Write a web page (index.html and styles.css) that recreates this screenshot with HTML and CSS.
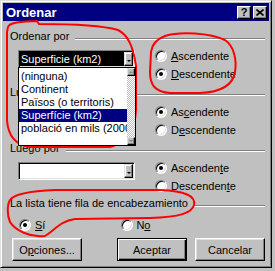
FILE: index.html
```html
<!DOCTYPE html>
<html lang="es">
<head>
    <meta charset="UTF-8">
    <title>Ordenar</title>
    <link rel="stylesheet" href="styles.css">
</head>
<body>

<div class="window">
    <!-- Title bar -->
    <div class="titlebar">
        <span class="title">Ordenar</span>
        <div class="title-buttons">
            <span class="tbtn help">?</span>
            <span class="tbtn">
                <svg width="8" height="7" viewBox="0 0 8 7"><path d="M0.5 0.5 L7.5 6.5 M7.5 0.5 L0.5 6.5" stroke="#000" stroke-width="1.6"/></svg>
            </span>
        </div>
    </div>

    <div class="content">
        <!-- Ordenar por -->
        <div class="group">
            <div class="legend"><span>Ordenar por</span></div>
            <div class="group-body">
                <div class="combo-col">
                    <div class="combo">
                        <span class="combo-field selected">Superficie (km2)</span>
                        <span class="combo-btn"><span class="arrow"></span></span>
                    </div>
                    <div class="dropdown">
                        <div class="items">
                            <div class="item">(ninguna)</div>
                            <div class="item">Continent</div>
                            <div class="item">Països (o territoris)</div>
                            <div class="item active">Superfície (km2)</div>
                            <div class="item">població en mils (2000)</div>
                        </div>
                        <div class="scrollbar">
                            <span class="sbtn"><span class="arrow up"></span></span>
                            <span class="sbtn"><span class="arrow"></span></span>
                        </div>
                    </div>
                </div>
                <div class="radios">
                    <div class="radio-row"><span class="radio"></span><span><u>A</u>scendente</span></div>
                    <div class="radio-row"><span class="radio on"></span><span><u>D</u>escendente</span></div>
                </div>
            </div>
        </div>

        <!-- Luego por -->
        <div class="group">
            <div class="legend"><span>Luego por</span></div>
            <div class="group-body">
                <div class="combo-col">
                    <div class="combo">
                        <span class="combo-field"></span>
                        <span class="combo-btn"><span class="arrow"></span></span>
                    </div>
                </div>
                <div class="radios">
                    <div class="radio-row"><span class="radio on"></span><span>As<u>c</u>endente</span></div>
                    <div class="radio-row"><span class="radio"></span><span>D<u>e</u>scendente</span></div>
                </div>
            </div>
        </div>

        <!-- Luego por -->
        <div class="group">
            <div class="legend"><span>Luego por</span></div>
            <div class="group-body">
                <div class="combo-col">
                    <div class="combo">
                        <span class="combo-field"></span>
                        <span class="combo-btn"><span class="arrow"></span></span>
                    </div>
                </div>
                <div class="radios">
                    <div class="radio-row"><span class="radio on"></span><span>Ascenden<u>t</u>e</span></div>
                    <div class="radio-row"><span class="radio"></span><span>Descenden<u>t</u>e</span></div>
                </div>
            </div>
        </div>

        <!-- La lista tiene fila de encabezamiento -->
        <div class="group header-group">
            <div class="legend"><span>La lista tiene fila de encabezamiento</span></div>
            <div class="header-options">
                <div class="radio-row si"><span class="radio on"></span><span><u>S</u>í</span></div>
                <div class="radio-row no"><span class="radio"></span><span>N<u>o</u></span></div>
            </div>
        </div>

        <div class="buttons">
            <span class="btn">O<u>p</u>ciones...</span>
            <div class="right-buttons">
                <span class="btn default">Aceptar</span>
                <span class="btn">Cancelar</span>
            </div>
        </div>
    </div>
</div>

<!-- hand drawn red marks -->
<svg class="marks" width="275" height="271" viewBox="0 0 275 271">
    <path d="M8 27 C10 22, 22 22, 37 21 L39 24 C70 24, 104 26, 118 30 C128 35, 133 46, 136 66 L136 110 C135 130, 128 142, 110 147 L30 147 C15 145, 8 135, 7 120 L7 32 Z"/>
    <path d="M165 36 C180 31, 210 33, 225 40 C234 46, 237 60, 235 72 C233 85, 222 92, 200 93 L170 93 C155 92, 150 85, 150 72 L151 52 C152 44, 157 39, 165 36 Z"/>
    <path d="M10 200 C14 194, 30 191, 55 190 L160 190 C185 191, 196 196, 194 205 C192 213, 180 217, 150 218 L75 219 C60 221, 55 230, 45 236 C30 238, 15 230, 10 222 C7 215, 7 205, 10 200 Z"/>
</svg>

</body>
</html>
```

FILE: styles.css
```css
body {
    margin: 0;
    background: #c0c0c0;
    font-family: "Liberation Sans", Arial, sans-serif;
    font-size: 11px;
    color: #000;
}

/* Window frame */
.window {
    width: 272px;
    height: 268px;
    box-sizing: border-box;
    border: 1px solid;
    border-color: #dfdfdf #000 #000 #dfdfdf;
    box-shadow: inset 1px 1px #fff, inset -1px -1px #808080;
    padding: 2px;
}

/* Title bar */
.titlebar {
    height: 18px;
    background: #000080;
    display: flex;
    align-items: center;
    justify-content: space-between;
    padding: 0 2px 0 3px;
}

.title {
    color: #fff;
    font-weight: bold;
    font-size: 13px;
}

.title-buttons {
    display: flex;
    gap: 2px;
}

.tbtn {
    width: 14px;
    height: 13px;
    box-sizing: border-box;
    background: #c0c0c0;
    border: 1px solid;
    border-color: #fff #000 #000 #fff;
    box-shadow: inset -1px -1px #808080;
    display: flex;
    align-items: center;
    justify-content: center;
}

.help {
    font-weight: bold;
    font-size: 11px;
    line-height: 11px;
}

/* Dialog content */
.content {
    padding: 9px 4px 0 7px;
}

.group {
    margin-bottom: 3px;
}

.legend {
    display: flex;
    line-height: 13px;
}

.legend::after {
    content: "";
    flex: 1;
    height: 0;
    margin: 8px 0 0 6px;
    border-top: 1px solid #808080;
    border-bottom: 1px solid #fff;
}

.group-body {
    display: flex;
    margin-top: 4px;
}

.combo-col {
    position: relative;
    width: 117px;
    margin-left: 8px;
    padding-top: 3px;
}

/* Combo box */
.combo {
    height: 18px;
    box-sizing: border-box;
    display: flex;
    padding: 1px;
    background: #fff;
    border: 1px solid;
    border-color: #808080 #fff #fff #808080;
    box-shadow: inset 1px 1px #000, inset -1px -1px #dfdfdf;
}

.combo-field {
    flex: 1;
    line-height: 14px;
    padding-left: 1px;
    white-space: nowrap;
    overflow: hidden;
}

.combo-field.selected {
    background: #000;
    color: #fff;
}

.combo-btn {
    width: 9px;
    box-sizing: border-box;
    background: #c0c0c0;
    border: 1px solid;
    border-color: #dfdfdf #000 #000 #dfdfdf;
    box-shadow: inset -1px -1px #808080, inset 1px 1px #fff;
    display: flex;
    align-items: center;
    justify-content: center;
}

.arrow {
    width: 0;
    height: 0;
    margin-top: 4px;
    border-left: 2px solid transparent;
    border-right: 2px solid transparent;
    border-top: 2px solid #000;
}

/* Open drop-down list */
.dropdown {
    position: absolute;
    top: 20px;
    left: 0;
    z-index: 2;
    width: 118px;
    height: 79px;
    box-sizing: border-box;
    border: 1px solid #000;
    background: #fff;
    display: flex;
}

.items {
    flex: 1;
    overflow: hidden;
    padding-top: 2px;
}

.item {
    line-height: 13px;
    padding-left: 2px;
    white-space: nowrap;
}

.item.active {
    background: #000080;
    color: #fff;
}

.scrollbar {
    width: 8px;
    display: flex;
    flex-direction: column;
    justify-content: space-between;
    background: repeating-conic-gradient(#fff 0 25%, #c0c0c0 0 50%) 0 0 / 2px 2px;
}

.sbtn {
    height: 8px;
    box-sizing: border-box;
    background: #c0c0c0;
    border: 1px solid;
    border-color: #dfdfdf #000 #000 #dfdfdf;
    box-shadow: inset -1px -1px #808080;
    display: flex;
    align-items: center;
    justify-content: center;
}

.sbtn .arrow {
    margin-top: 0;
    border-top-color: #808080;
}

.sbtn .arrow.up {
    border-top: 0;
    border-bottom: 2px solid #808080;
}

/* Radio buttons */
.radios {
    margin-left: 20px;
}

.radio-row {
    display: flex;
    align-items: center;
    height: 18px;
}

.radio {
    position: relative;
    width: 12px;
    height: 12px;
    margin-right: 4px;
    box-sizing: border-box;
    border-radius: 50%;
    border: 1px solid;
    border-color: #808080 #fff #fff #808080;
    box-shadow: inset 1px 1px #000, inset -1px -1px #dfdfdf;
    background: #fff;
}

.radio.on::after {
    content: "";
    position: absolute;
    top: 3px;
    left: 3px;
    width: 4px;
    height: 4px;
    border-radius: 50%;
    background: #000;
}

.header-group {
    margin-top: -1px;
}

.header-options {
    display: flex;
    margin-top: 6px;
    padding-left: 9px;
}

.radio-row.no {
    margin-left: 76px;
}

.radio-row.no .radio {
    margin-right: 3px;
}

/* Push buttons */
.buttons {
    display: flex;
    margin-top: 4px;
    padding-left: 2px;
}

.right-buttons {
    display: flex;
    gap: 8px;
    margin-left: auto;
}

.btn {
    width: 70px;
    height: 23px;
    box-sizing: border-box;
    border: 1px solid;
    border-color: #fff #000 #000 #fff;
    box-shadow: inset -1px -1px #808080, inset 1px 1px #dfdfdf;
    display: flex;
    align-items: center;
    justify-content: center;
}

.btn.default {
    border-color: #000;
    box-shadow: inset 1px 1px #fff, inset -1px -1px #000, inset -2px -2px #808080;
}

/* Red annotation marks */
.marks {
    position: absolute;
    top: 0;
    left: 0;
    fill: none;
    stroke: #f00;
    stroke-width: 2;
}
```
